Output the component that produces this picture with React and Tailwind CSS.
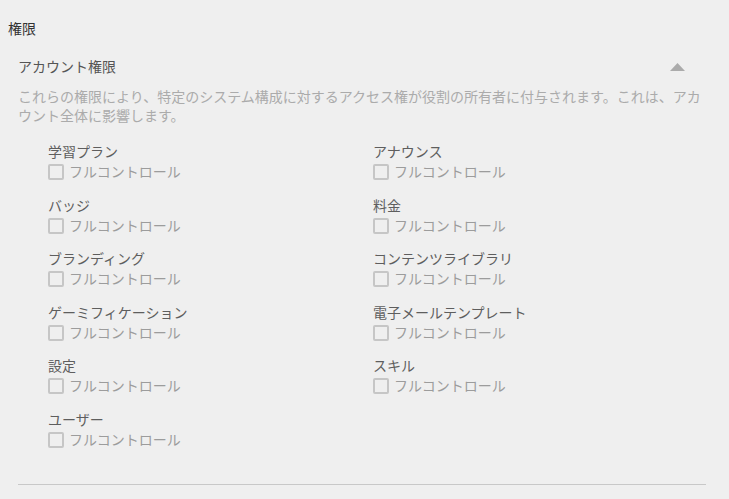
import React from "react"

const font = { fontFamily: '"Noto Sans CJK JP", "Noto Sans", sans-serif' }

const items = [
  ["学習プラン", "アナウンス"],
  ["バッジ", "料金"],
  ["ブランディング", "コンテンツライブラリ"],
  ["ゲーミフィケーション", "電子メールテンプレート"],
  ["設定", "スキル"],
  ["ユーザー", null],
]

function Permission({ label }) {
  return (
    <div className="h-[53.6px]">
      <div className="text-sm leading-[20px] text-[#5e5e5e]">{label}</div>
      <label className="flex h-[20px] items-center gap-[5px] cursor-pointer">
        <span className="mt-[2px] block h-4 w-4 rounded-[2px] border-2 border-[#c6c6c6]" />
        <span className="text-sm leading-[20px] text-[#9c9c9c]">フルコントロール</span>
      </label>
    </div>
  )
}

export default function App() {
  return (
    <div className="h-[499px] w-full bg-[#efefef] overflow-hidden" style={font}>
      <div className="pl-2 pt-[18px] text-sm leading-[20px] text-[#333]">権限</div>

      <section className="mx-[18px] w-[688px]">
        {/* アカウント権限 */}
        <div className="mt-[18px] flex items-center justify-between">
          <h3 className="text-sm leading-[20px] text-[#555]">アカウント権限</h3>
          <svg width="15" height="8" viewBox="0 0 15 8" className="mr-[21px] mt-[1px]">
            <polygon points="7.5,0 15,8 0,8" fill="#ababab" />
          </svg>
        </div>
        <p className="mt-[11px] text-sm leading-[19px] text-[#ababab]">
          これらの権限により、特定のシステム構成に対するアクセス権が役割の所有者に付与されます。これは、アカウント全体に影響します。
        </p>

        <div className="mt-[16px] ml-[30px] grid grid-cols-[325px_1fr]">
          {items.map(([left, right]) => (
            <React.Fragment key={left}>
              <Permission label={left} />
              {right ? <Permission label={right} /> : <div />}
            </React.Fragment>
          ))}
        </div>

        <div className="mt-[21px] h-px bg-[#c8c8c8]" />
      </section>
    </div>
  )
}
